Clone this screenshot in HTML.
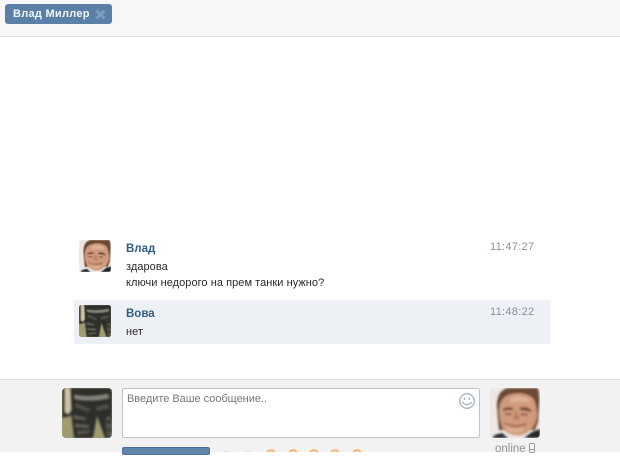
<!DOCTYPE html>
<html lang="ru">
<head>
<meta charset="utf-8">
<title>Чат</title>
<style>
html,body{margin:0;padding:0;background:#fff}
body{width:620px;height:452px;position:relative;overflow:hidden;font:11px "Liberation Sans","Noto Sans CJK JP",sans-serif;color:#222}
.a{position:absolute;white-space:nowrap}
.top{left:0;top:0;width:620px;height:36px;background:#f7f7f7;border-bottom:1px solid #e1e1e1}
.tab{left:5px;top:4px;width:107px;height:20px;background:#5b80a8;border-radius:3px}
.tabt{left:13px;top:7px;color:#f2f6fa;font-weight:bold;font-size:11px;line-height:14px;letter-spacing:.28px}
.row{left:74px;top:300px;width:476px;height:44px;background:#edf0f5}
.name{color:#2f5f85;font-weight:bold;font-size:11.5px;line-height:14px}
.msg{color:#2a2a2a;font-size:11px;line-height:14px;letter-spacing:.05px}
.time{color:#87929d;font-size:11px;line-height:14px;letter-spacing:.3px}
.bottom{left:0;top:379px;width:620px;height:73px;background:#f2f2f2;border-top:1px solid #dcdcdc;box-sizing:border-box}
.input{left:122px;top:388px;width:358px;height:50px;background:#fff;border:1px solid #bcc5cf;box-sizing:border-box;border-radius:2px}
.ph{left:127px;top:392px;color:#777;font-size:11px;line-height:14px;letter-spacing:-.03px}
.btn{left:122px;top:447px;width:88px;height:8px;background:#5f84aa;border:1px solid #4d719a;box-sizing:border-box;border-radius:2px}
.online{left:495px;top:442px;color:#939393;font-size:11.5px;line-height:14px}
svg{position:absolute;display:block}
</style>
</head>
<body>
<div class="a top"></div>
<div class="a tab"></div>
<div class="a tabt">Влад Миллер</div>
<svg style="left:95px;top:9px" width="11" height="11" viewBox="0 0 11 11"><path d="M1.5 1.5L9.5 9.5M9.5 1.5L1.5 9.5" stroke="#7e9cbc" stroke-width="2.8"/></svg>

<div class="a row"></div>

<svg style="left:79px;top:240px" width="32" height="32" viewBox="0 0 50 50">
<use href="#face"/>
</svg>
<div class="a name" style="left:126px;top:242px">Влад</div>
<div class="a msg" style="left:126px;top:260px">здарова</div>
<div class="a msg" style="left:126px;top:276px">ключи недорого на прем танки нужно?</div>
<div class="a time" style="left:490px;top:240px">11:47:27</div>

<svg style="left:79px;top:305px" width="32" height="32" viewBox="0 0 50 50">
<use href="#jeans"/>
</svg>
<div class="a name" style="left:126px;top:307px">Вова</div>
<div class="a msg" style="left:126px;top:325px">нет</div>
<div class="a time" style="left:490px;top:305px">11:48:22</div>

<div class="a bottom"></div>
<svg style="left:62px;top:388px" width="50" height="50" viewBox="0 0 50 50">
<defs>
<clipPath id="r"><rect width="50" height="50" rx="4"/></clipPath>
<filter id="b" x="-10%" y="-10%" width="120%" height="120%"><feGaussianBlur stdDeviation="1"/></filter>
<g id="jeans" clip-path="url(#r)">
<rect width="50" height="50" fill="#a19b72"/>
<g filter="url(#b)">
<path d="M0 0H10L9 28L0 30Z" fill="#3a372f"/>
<path d="M3 0H8L9 22L6 26L3 24Z" fill="#cfc5a8"/>
<path d="M9 0H50V34L46 28L44 36L46 50H43L35 28L31 50H12L9 24Z" fill="#2e2e2b"/>
<path d="M42 30L50 32V50H44Z" fill="#3a3a34"/>
<path d="M12 7Q28 10 46 6L47 10Q30 14 13 11Z" fill="#85857c"/>
<path d="M14 15L28 21L27 24L13 19ZM34 19L46 16L47 20L35 23Z" fill="#4f4f48"/>
<path d="M12 27L24 30L24 32L12 31ZM13 36L27 37L26 40L13 39Z" fill="#5e5e56"/>
<path d="M15 43L28 42L27 45L15 47Z" fill="#55554d"/>
<path d="M45 35L49 37L49 41L45 40ZM45 44L50 44V48L46 48Z" fill="#5c5c55"/>
</g>
</g>
<g id="face" clip-path="url(#r)">
<rect width="50" height="50" fill="#eee7e4"/>
<g filter="url(#b)">
<path d="M7 20Q6 3 18 0H48Q50 8 49 18L48 34L45 42H9Z" fill="#6a4a34"/>
<path d="M9 22Q10 8 22 6Q33 3 43 10Q47 17 47 28Q45 42 33 47Q20 49 13 41Q9 33 9 22Z" fill="#d09a7b"/>
<path d="M20 10Q30 6 39 11L39 15Q30 13 20 15Z" fill="#deb196"/>
<path d="M13 21Q18 18 23 20L23 22Q18 21 13 23ZM30 20Q36 18 41 22L41 24Q36 22 30 22Z" fill="#5d3d2d"/>
<path d="M15 25L22 25L21 27L15 27ZM31 25L38 26L37 28L31 27Z" fill="#8a5e48"/>
<path d="M26 22L23 31L30 32Z" fill="#b98065"/>
<path d="M14 34Q24 40 37 35L36 37Q24 41 14 35Z" fill="#8a4a3e"/>
<path d="M16 39Q25 43 34 40L33 43Q25 46 17 42Z" fill="#dfb399"/>
<path d="M2 50L5 47L12 45L18 50ZM34 50L42 44L50 41V50Z" fill="#20282c"/>
</g>
</g>
</defs>
<use href="#jeans"/>
</svg>

<div class="a input"></div>
<div class="a ph">Введите Ваше сообщение..</div>
<svg style="left:458px;top:392px" width="18" height="18" viewBox="0 0 18 18" fill="none" stroke="#a9b6c5" stroke-width="1.4">
<circle cx="9" cy="9" r="7.3"/>
<path d="M4.6 10.4Q9 15 13.4 10.4" stroke-linecap="round"/>
<path d="M6.5 5.5V8M11.5 5.5V8"/>
</svg>

<svg style="left:490px;top:388px" width="50" height="50" viewBox="0 0 50 50"><use href="#face"/></svg>
<div class="a online">online</div>
<svg style="left:528px;top:443px" width="8" height="10" viewBox="0 0 8 10" fill="none" stroke="#999"><rect x="1.5" y=".5" width="5" height="9" rx="1"/><path d="M1.5 6.5H6.5"/></svg>

<div class="a btn"></div>
<svg style="left:222px;top:448px" width="146" height="4" viewBox="0 0 146 4">
<circle cx="4" cy="5" r="1.6" fill="#bbb"/>
<circle cx="26" cy="5" r="1.6" fill="#bbb"/>
<g fill="#f6d9b4" stroke="#eeb372" stroke-width="1.4">
<circle cx="49" cy="7" r="5"/><circle cx="71" cy="7" r="5"/><circle cx="92" cy="7" r="5"/><circle cx="113" cy="7" r="5"/><circle cx="135" cy="7" r="5"/>
</g>
</svg>
</body>
</html>
